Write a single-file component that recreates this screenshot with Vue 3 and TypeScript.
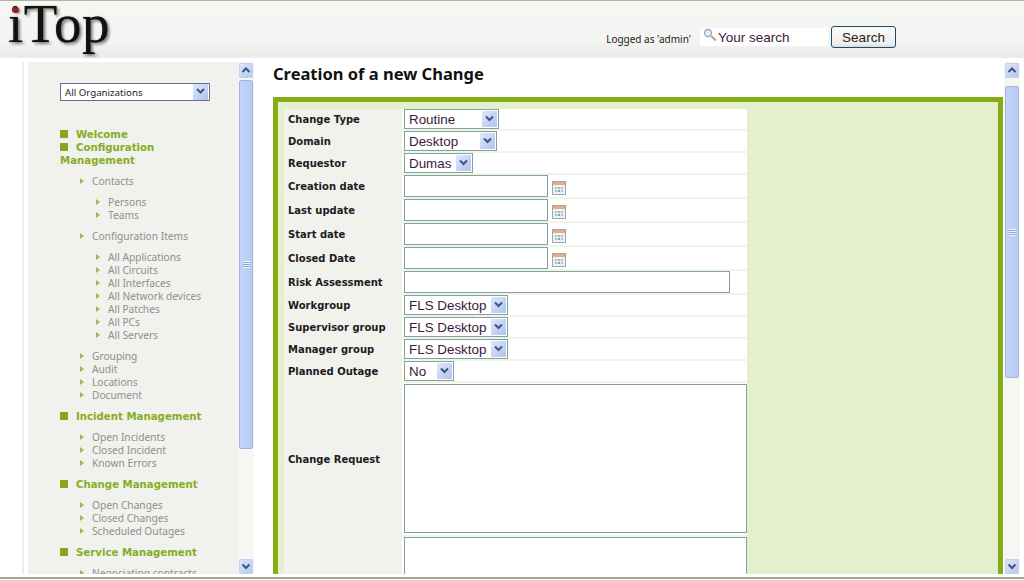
<script setup lang="ts">
interface Field { label: string; kind: 'select' | 'date' | 'text' | 'area'; value?: string; width?: number; tall?: boolean }

const fields: Field[] = [
  { label: 'Change Type', kind: 'select', value: 'Routine', width: 95 },
  { label: 'Domain', kind: 'select', value: 'Desktop', width: 93 },
  { label: 'Requestor', kind: 'select', value: 'Dumas', width: 69 },
  { label: 'Creation date', kind: 'date' },
  { label: 'Last update', kind: 'date' },
  { label: 'Start date', kind: 'date' },
  { label: 'Closed Date', kind: 'date' },
  { label: 'Risk Assessment', kind: 'text' },
  { label: 'Workgroup', kind: 'select', value: 'FLS Desktop', width: 104 },
  { label: 'Supervisor group', kind: 'select', value: 'FLS Desktop', width: 104 },
  { label: 'Manager group', kind: 'select', value: 'FLS Desktop', width: 104 },
  { label: 'Planned Outage', kind: 'select', value: 'No', width: 50 },
  { label: 'Change Request', kind: 'area', tall: true },
  { label: '', kind: 'area' },
]

const menu = [
  { title: 'Welcome' },
  {
    title: 'Configuration Management',
    groups: [
      { name: 'Contacts', items: ['Persons', 'Teams'] },
      { name: 'Configuration Items', items: ['All Applications', 'All Circuits', 'All Interfaces', 'All Network devices', 'All Patches', 'All PCs', 'All Servers'] },
      { name: 'Grouping' },
      { name: 'Audit' },
      { name: 'Locations' },
      { name: 'Document' },
    ],
  },
  { title: 'Incident Management', groups: [{ name: 'Open Incidents' }, { name: 'Closed Incident' }, { name: 'Known Errors' }] },
  { title: 'Change Management', groups: [{ name: 'Open Changes' }, { name: 'Closed Changes' }, { name: 'Scheduled Outages' }] },
  { title: 'Service Management', groups: [{ name: 'Negociating contracts' }] },
]
</script>

<template>
  <div class="page">
    <header class="top">
      <div class="logo">iTop<span class="logo-dot"></span></div>
      <div class="tools">
        <span class="logged">Logged as 'admin'</span>
        <label class="search-box">
          <svg class="lens" width="14" height="14" viewBox="0 0 14 14">
            <circle cx="5" cy="5" r="3.5" fill="#e6eef5" stroke="#8fa6ba" stroke-width="1.3" />
            <path d="M8 8l5 4.5" stroke="#a8a8a8" stroke-width="2" />
          </svg>
          <span>Your search</span>
        </label>
        <button class="search-btn">Search</button>
      </div>
    </header>

    <main class="main">
      <aside class="side-wrap">
        <div class="side">
          <div class="org">
            <span class="org-text">All Organizations</span>
            <span class="arrow org-arrow">
              <svg width="15" height="15" viewBox="0 0 15 15"><path d="M4 5l3.5 3.5L11 5" fill="none" stroke="#3d5687" stroke-width="2" /></svg>
            </span>
          </div>
          <ul class="menu">
            <li v-for="m in menu" :key="m.title" class="section">
              <div class="heading"><i class="square"></i>{{ m.title }}</div>
              <ul v-if="m.groups" class="groups">
                <li v-for="g in m.groups" :key="g.name">
                  <div class="link"><i class="tri"></i>{{ g.name }}</div>
                  <ul v-if="g.items" class="items">
                    <li v-for="it in g.items" :key="it" class="link"><i class="tri"></i>{{ it }}</li>
                  </ul>
                </li>
              </ul>
            </li>
          </ul>
        </div>
        <div class="scrollbar">
          <span class="sb-btn"><svg width="14" height="15" viewBox="0 0 14 15"><path d="M3.5 9L7 5.5 10.500 9" fill="none" stroke="#3d5687" stroke-width="2" /></svg></span>
          <div class="sb-track">
            <div class="sb-thumb side-thumb"><i class="grip"></i></div>
          </div>
          <span class="sb-btn"><svg width="14" height="15" viewBox="0 0 14 15"><path d="M3.5 5.500L7 9l3.500-3.500" fill="none" stroke="#3d5687" stroke-width="2" /></svg></span>
        </div>
      </aside>

      <section class="content">
        <div class="pane">
          <h1 class="title">Creation of a new Change</h1>
          <div class="box">
            <div class="form">
              <div v-for="f in fields" :key="f.label" class="row">
                <div class="label">{{ f.label }}</div>
                <div class="value">
                  <div v-if="f.kind === 'select'" class="select" :style="{ width: f.width + 'px' }">
                    <span class="select-text">{{ f.value }}</span>
                    <span class="arrow">
                      <svg width="15" height="15" viewBox="0 0 15 15"><path d="M4 5.5l3.5 3.500L11 5.500" fill="none" stroke="#3d5687" stroke-width="2" /></svg>
                    </span>
                  </div>
                  <template v-else-if="f.kind === 'date'">
                    <input class="input date" type="text" />
                    <svg class="cal" width="14" height="14" viewBox="0 0 14 14">
                      <rect x="0.5" y="0.5" width="13" height="13" fill="#eef2f6" stroke="#9aa8ba" />
                      <rect x="1" y="1" width="12" height="3" fill="#eeaa7a" />
                      <path d="M3 6h2v2H3zM6 6h2v2H6zM9 6h2v2H9zM3 9h2v2H3zM9 9h2v2H9z" fill="#a8bcd4" />
                      <path d="M6 9h2v2H6z" fill="#7ab46c" />
                    </svg>
                  </template>
                  <input v-else-if="f.kind === 'text'" class="input risk" type="text" />
                  <textarea v-else class="area" :class="{ tall: f.tall }"></textarea>
                </div>
              </div>
            </div>
          </div>
        </div>
        <div class="scrollbar">
          <span class="sb-btn"><svg width="14" height="15" viewBox="0 0 14 15"><path d="M3.5 9L7 5.5 10.500 9" fill="none" stroke="#3d5687" stroke-width="2" /></svg></span>
          <div class="sb-track">
            <div class="sb-thumb main-thumb"><i class="grip"></i></div>
          </div>
          <span class="sb-btn"><svg width="14" height="15" viewBox="0 0 14 15"><path d="M3.5 5.500L7 9l3.500-3.500" fill="none" stroke="#3d5687" stroke-width="2" /></svg></span>
        </div>
      </section>
    </main>
    <div class="foot"></div>
  </div>
</template>

<style scoped>
.page {
  width: 1024px;
  height: 580px;
  display: flex;
  flex-direction: column;
  overflow: hidden;
  background: #fff;
  font-family: "Liberation Sans", sans-serif;
}
.top {
  height: 58px;
  flex: none;
  box-sizing: border-box;
  border-top: 1px solid #b4b49c;
  background: linear-gradient(#f6f6f4 0, #f4f4f2 70%, #ebebe9 100%);
  display: flex;
  justify-content: space-between;
  position: relative;
}
.logo {
  font-family: "Liberation Serif", serif;
  font-size: 55px;
  line-height: 45px;
  color: #111;
  margin-left: 8px;
  letter-spacing: 0.5px;
  text-shadow: 2px 2px 3px #777, 0 0 1px #333;
  position: relative;
}
.logo-dot {
  position: absolute;
  left: 4px;
  top: 6px;
  width: 7px;
  height: 6px;
  border-radius: 50%;
  background: #a01c24;
}
.tools {
  display: flex;
  align-items: center;
  padding: 25px 128px 0 0;
  height: 22px;
}
.logged {
  font-family: "Noto Sans", sans-serif;
  font-size: 10px;
  color: #222;
  margin-right: 9px;
  position: relative;
  top: 2px;
}
.search-box {
  width: 128px;
  height: 18px;
  background: #fff;
  display: flex;
  align-items: center;
  gap: 1px;
  padding-left: 3px;
  box-sizing: border-box;
  font-size: 13.5px;
  color: #3a1a3a;
  margin-right: 3px;
}
.lens { flex: none; position: relative; top: -2px; }
.search-btn {
  width: 65px;
  height: 22px;
  padding: 0;
  border: 1px solid #1c4a6e;
  border-radius: 3px;
  background: linear-gradient(#fbfbf9, #eeeeea 85%, #dcdcd6);
  font: 13.5px "Liberation Sans", sans-serif;
  color: #222;
}
.main {
  flex: 1;
  min-height: 0;
  display: flex;
  padding-top: 4px;
  padding-bottom: 3px;
  box-sizing: border-box;
}
.side-wrap {
  display: flex;
  margin-left: 22px;
  padding-left: 4px;
  width: 232px;
  flex: none;
  box-sizing: border-box;
  border-left: 2px solid #eeeeea;
  overflow: hidden;
}
.side {
  width: 210px;
  flex: none;
  background: #f1f1ed;
  padding: 21px 0 0 32px;
  box-sizing: border-box;
  overflow: hidden;
}
.org {
  width: 150px;
  height: 18px;
  box-sizing: border-box;
  border: 1px solid #666f8c;
  background: #fff;
  display: flex;
  justify-content: space-between;
  align-items: center;
  padding-left: 4px;
  font-family: "Noto Sans", sans-serif;
  font-size: 9.7px;
  color: #222;
}
.org-arrow { height: 14px; margin-right: 1px; }
.menu, .groups, .items { list-style: none; margin: 0; padding: 0; }
.menu { margin-top: 27px; width: 150px; }
.heading {
  font-family: "DejaVu Sans", sans-serif;
  font-weight: bold;
  font-size: 10.2px;
  line-height: 13px;
  color: #86ad23;
}
.square {
  display: inline-block;
  width: 8px;
  height: 8px;
  background: #86a81e;
  margin-right: 8px;
}
.groups { margin: 8px 0 8px 20px; }
.link {
  font-family: "Noto Sans", sans-serif;
  font-size: 10.2px;
  line-height: 13px;
  color: #8f8f8f;
  white-space: nowrap;
}
.tri {
  display: inline-block;
  width: 0;
  height: 0;
  border-left: 4px solid #a3b45c;
  border-top: 3.5px solid transparent;
  border-bottom: 3.5px solid transparent;
  margin-right: 8px;
  position: relative;
  top: -1px;
}
.items { margin: 8px 0 8px 16px; }
.scrollbar {
  width: 16px;
  flex: none;
  box-sizing: border-box;
  padding: 1px 1px 0;
  display: flex;
  flex-direction: column;
  background: #f7f6f2;
}
.sb-btn {
  width: 14px;
  height: 15px;
  flex: none;
  border-radius: 2px;
  background: linear-gradient(135deg, #dfe8fb, #b4c6ee);
  box-shadow: inset 0 0 0 1px #c3d1f2;
  display: block;
}
.sb-btn svg { display: block; }
.sb-track { flex: 1; min-height: 0; padding-top: 2px; }
.sb-thumb {
  width: 14px;
  border-radius: 2px;
  box-sizing: border-box;
  border: 1px solid #9fb4de;
  background: linear-gradient(90deg, #c4d4f8, #b8cbf4);
  display: flex;
  align-items: center;
  justify-content: center;
}
.side-thumb { height: 369px; }
.main-thumb { height: 292px; margin-top: 6px; }
.grip {
  width: 7px;
  height: 7px;
  background: repeating-linear-gradient(#eef3fd 0, #eef3fd 1px, #8ea6d8 1px, #8ea6d8 2px);
}
.content {
  flex: 1;
  min-width: 0;
  display: flex;
  margin-left: 8px;
  padding-right: 4px;
}
.pane {
  flex: 1;
  min-width: 0;
  overflow: hidden;
  padding: 0 0 0 11px;
}
.title {
  margin: 0;
  height: 35px;
  font-family: "Noto Sans", sans-serif;
  font-size: 16.5px;
  line-height: 24px;
  font-weight: bold;
  color: #111;
}
.box {
  width: 730px;
  box-sizing: border-box;
  border: 5px solid #84ac14;
  background: #e4f0cd;
  padding: 7px 0 0 6px;
}
.form {
  width: 463px;
  display: flex;
  flex-direction: column;
  gap: 2px;
  background: #eff5e3;
}
.row {
  display: grid;
  grid-template-columns: 118px 345px;
}
.label {
  background: #f1f1ed;
  padding-left: 4px;
  margin-right: 2px;
  display: flex;
  align-items: center;
  font-family: "DejaVu Sans", sans-serif;
  font-weight: bold;
  font-size: 10px;
  color: #1c1c1c;
}
.value {
  background: #fff;
  display: flex;
  align-items: center;
  padding-left: 2px;
}
.select {
  height: 20px;
  box-sizing: border-box;
  border: 1px solid #84a0a0;
  background: #fff;
  display: flex;
  justify-content: space-between;
  align-items: center;
  padding-left: 4px;
  font-size: 13.4px;
  color: #3a1a3a;
}
.arrow {
  display: block;
  width: 15px;
  height: 16px;
  margin-right: 1px;
  background: linear-gradient(135deg, #dfe8fb, #b0c3ee);
}
.arrow svg { display: block; }
.input {
  height: 22px;
  box-sizing: border-box;
  border: 1px solid #84a0a0;
  background: #fff;
  padding: 0;
  margin: 0;
  outline: none;
}
.date { width: 144px; }
.risk { width: 326px; }
.cal { margin-left: 4px; position: relative; top: 2px; }
.area {
  display: block;
  width: 343px;
  height: 150px;
  box-sizing: border-box;
  border: 1px solid #84a0a0;
  padding: 0;
  margin: 0;
  resize: none;
  outline: none;
}
.area.tall { height: 149px; margin: 1px 0 2px; }
.foot {
  height: 2px;
  flex: none;
  background: #a3a39f;
  margin-bottom: 1px;
}
</style>
